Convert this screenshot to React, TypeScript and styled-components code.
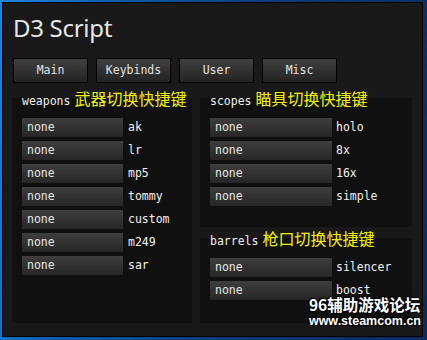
import React from "react";
import styled, { createGlobalStyle } from "styled-components";

const Global = createGlobalStyle`
  html, body { margin: 0; padding: 0; }
  body {
    width: 427px;
    height: 340px;
    overflow: hidden;
    background: linear-gradient(100deg, #1a88e0 0%, #0f5aa8 25%, #0b3a74 60%, #092c5e 100%);
  }
`;

const Desktop = styled.div`
  width: 427px;
  height: 340px;
  box-sizing: border-box;
  padding: 2px 0 0 2px;
`;

const Window = styled.div`
  position: relative;
  width: 421px;
  height: 335px;
  box-sizing: border-box;
  border: 1px solid #000;
  background: #191919;
  padding: 0 9px 13px 9px;
  display: flex;
  flex-direction: column;
`;

const Title = styled.h1`
  margin: 13px 0 0 1px;
  height: 24px;
  font: 400 24px/1 "Noto Sans", "Open Sans", sans-serif;
  color: #e6e6e6;
  letter-spacing: -0.3px;
`;

const TabRow = styled.div`
  display: flex;
  gap: 8px;
  margin: 18px 0 0 1px;
`;

const Tab = styled.button`
  width: 75px;
  height: 25px;
  box-sizing: border-box;
  border: 1px solid #000;
  background: linear-gradient(#404040, #232323);
  color: #e2e2e2;
  font: 400 11.5px/1 "DejaVu Sans Mono", monospace;
  padding: 0;
  cursor: pointer;
`;

const Columns = styled.div`
  flex: 1;
  display: flex;
  gap: 8px;
  margin-top: 15px;
`;

const Column = styled.div<{ $w: number }>`
  width: ${(p) => p.$w}px;
  display: flex;
  flex-direction: column;
`;

const Group = styled.section<{ $grow?: boolean; $mt?: number; $pb?: number }>`
  background: #101010;
  margin-top: ${(p) => p.$mt ?? 0}px;
  padding: 0 10px ${(p) => p.$pb ?? 0}px;
  display: flex;
  flex-direction: column;
  ${(p) => (p.$grow ? "flex: 1;" : "")}
`;

const GroupHeader = styled.div`
  display: flex;
  align-items: baseline;
  gap: 4px;
  height: 20px;
  margin-top: -10px;
  line-height: 20px;
  white-space: nowrap;
`;

const GroupName = styled.span`
  flex-shrink: 0;
  font: 400 11.5px/20px "DejaVu Sans Mono", monospace;
  color: #f0f0f0;
`;

const GroupNote = styled.span`
  flex-shrink: 0;
  font: 400 16px/20px "Noto Sans CJK SC", sans-serif;
  color: #f2f200;
`;

const RowList = styled.div`
  display: flex;
  flex-direction: column;
  gap: 4px;
  padding-top: 10px;
`;

const Row = styled.div<{ $gap: number }>`
  display: flex;
  align-items: center;
  gap: ${(p) => p.$gap}px;
  height: 19px;
`;

const KeyBox = styled.div<{ $w: number }>`
  width: ${(p) => p.$w}px;
  height: 19px;
  box-sizing: border-box;
  padding-left: 5px;
  background: linear-gradient(#3e3e3e, #262626);
  color: #e6e6e6;
  font: 400 11.5px/19px "DejaVu Sans Mono", monospace;
`;

const RowLabel = styled.span`
  color: #f0f0f0;
  font: 400 11.5px/19px "DejaVu Sans Mono", monospace;
`;

const Watermark = styled.div`
  position: absolute;
  right: 1px;
  bottom: 7px;
  display: flex;
  flex-direction: column;
  align-items: flex-start;
  color: #fff;
  text-shadow: 0 0 2px #000, 1px 1px 1px #000, -1px -1px 1px #000;
  pointer-events: none;
`;

const WmTop = styled.span`
  font: 700 15.5px/18px "Noto Sans CJK SC", sans-serif;
`;

const WmBottom = styled.span`
  font: 700 12.5px/16px "Liberation Sans", Arial, sans-serif;
`;

type GroupDef = { name: string; note: string; items: string[] };

const weapons: GroupDef = {
  name: "weapons",
  note: "武器切换快捷键",
  items: ["ak", "lr", "mp5", "tommy", "custom", "m249", "sar"],
};
const scopes: GroupDef = {
  name: "scopes",
  note: "瞄具切换快捷键",
  items: ["holo", "8x", "16x", "simple"],
};
const barrels: GroupDef = {
  name: "barrels",
  note: "枪口切换快捷键",
  items: ["silencer", "boost"],
};

function Rows({ items, boxW, gap }: { items: string[]; boxW: number; gap: number }) {
  return (
    <RowList>
      {items.map((it) => (
        <Row key={it} $gap={gap}>
          <KeyBox $w={boxW}>none</KeyBox>
          <RowLabel>{it}</RowLabel>
        </Row>
      ))}
    </RowList>
  );
}

function Header({ g }: { g: GroupDef }) {
  return (
    <GroupHeader>
      <GroupName>{g.name}</GroupName>
      <GroupNote>{g.note}</GroupNote>
    </GroupHeader>
  );
}

export default function App() {
  return (
    <>
      <Global />
      <Desktop>
        <Window>
          <Title>D3 Script</Title>
          <TabRow>
            {["Main", "Keybinds", "User", "Misc"].map((t) => (
              <Tab key={t}>{t}</Tab>
            ))}
          </TabRow>
          <Columns>
            <Column $w={180}>
              <Group $grow>
                <Header g={weapons} />
                <Rows items={weapons.items} boxW={101} gap={5} />
              </Group>
            </Column>
            <Column $w={212}>
              <Group $pb={21}>
                <Header g={scopes} />
                <Rows items={scopes.items} boxW={122} gap={4} />
              </Group>
              <Group $grow $mt={11}>
                <Header g={barrels} />
                <Rows items={barrels.items} boxW={122} gap={4} />
              </Group>
            </Column>
          </Columns>
          <Watermark>
            <WmTop>96辅助游戏论坛</WmTop>
            <WmBottom>www.steamcom.cn</WmBottom>
          </Watermark>
        </Window>
      </Desktop>
    </>
  );
}
